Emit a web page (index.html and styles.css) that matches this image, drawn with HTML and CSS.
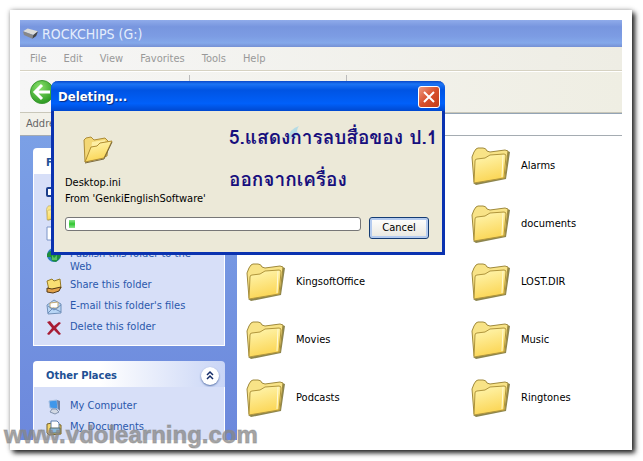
FILE: index.html
```
<!DOCTYPE html>
<html lang="en">
  <head>
    <meta charset="UTF-8" />
    <meta name="viewport" content="width=device-width, initial-scale=1.0" />
    <title>ROCKCHIPS (G:)</title>
    <link rel="stylesheet" href="styles.css">
  </head>
  <body>
    <svg class="defs" width="0" height="0" aria-hidden="true">
      <defs>
        <linearGradient id="paper" x1="0" y1="0" x2="0.3" y2="1">
          <stop offset="0" stop-color="#fff7b4" />
          <stop offset="1" stop-color="#fbd656" />
        </linearGradient>
        <radialGradient id="green" cx="0.4" cy="0.3" r="0.7">
          <stop offset="0" stop-color="#8be36c" />
          <stop offset="1" stop-color="#2c9a22" />
        </radialGradient>
        <symbol id="folder" viewBox="0 0 40 40">
          <path d="M36 5 L39 6 L35 33 L5 39 L2 37 L33 32 Z" fill="#8c854f" />
          <path d="M3 36 L1 11 L3 6 Q5 2 7 2 L12 2 Q15 2 16 5 L19 6 L34 4 L37 5 L34 32 Z" fill="#f8e387" stroke="#a08a3c" />
          <path d="M3 37 L4 15 Q4 13 6 13 L14 12 L19 9 L33 8 Q35 8 35 10 L33 32 Z" fill="url(#paper)" stroke="#b0953c" />
          <path d="M32 9 L31 31" stroke="#fffbd9" fill="none" />
        </symbol>
      </defs>
    </svg>
    <div class="frame">
      <main class="window">
        <header class="titlebar">
          <svg class="drive" viewBox="0 0 16 12" aria-hidden="true">
            <path d="M0 3 L5 0 L16 3 L11 7 Z" fill="#dcdcd8" />
            <path d="M0 3 L11 7 L10 11 L1 7 Z" fill="#888" />
            <path d="M11 7 L16 3 L14 8 L10 11 Z" fill="#444" />
          </svg>
          <h1>ROCKCHIPS (G:)</h1>
        </header>
        <nav class="menubar">
          <button type="button">File</button>
          <button type="button">Edit</button>
          <button type="button">View</button>
          <button type="button">Favorites</button>
          <button type="button">Tools</button>
          <button type="button">Help</button>
        </nav>
        <div class="toolbar">
          <button type="button" class="back" aria-label="Back">
            <svg viewBox="0 0 24 24" aria-hidden="true">
              <circle cx="12" cy="12" r="11.5" fill="url(#green)" stroke="#3d9a33" />
              <path d="M12 5 L5 12 L12 19 M6 12 H20" fill="none" stroke="#fff" stroke-width="3" />
            </svg>
          </button>
          <span class="divider"></span>
          <span class="divider"></span>
        </div>
        <div class="addressbar">
          <label for="address">Address</label>
          <input id="address" type="text" />
        </div>
        <div class="content">
          <aside class="sidebar">
            <section class="panel">
              <h2>File and Folder Tasks</h2>
              <ul>
                <li>
                  <svg viewBox="0 0 16 16" aria-hidden="true"><rect x="1" y="4" width="14" height="8" rx="1" fill="#fff" stroke="#1b3e8c" stroke-width="2" /></svg>
                </li>
                <li>
                  <svg viewBox="0 0 40 40" aria-hidden="true"><use href="#folder" /></svg>
                </li>
                <li>
                  <svg viewBox="0 0 16 16" aria-hidden="true"><path d="M1 1 H11 V14 H1 Z" fill="#fff" stroke="#7a94c8" /></svg>
                </li>
                <li>
                  <svg viewBox="0 0 16 16" aria-hidden="true">
                    <circle cx="8" cy="8" r="7" fill="#2f7fc4" />
                    <path d="M1 7 Q4 2 8 5 L14 5 Q16 9 13 12 L10 15 L6 14 L5 10 L1 10 Z" fill="#1d8d3b" />
                    <path d="M6 8 L8 11 L11 8 L11 13 L6 13 Z" fill="#56c262" />
                  </svg>
                  <a href="#">Publish this folder to the<br />Web</a>
                </li>
                <li>
                  <svg viewBox="0 0 16 16" aria-hidden="true">
                    <path d="M1 3 L6 1 L8 3 L14 1 L15 10 L3 12 Z" fill="#f8df73" stroke="#977b25" />
                    <path d="M1 10 L6 11 L15 9 L13 13 L7 15 L1 14 Z" fill="#e2a24b" stroke="#553a16" />
                  </svg>
                  <a href="#">Share this folder</a>
                </li>
                <li>
                  <svg viewBox="0 0 16 16" aria-hidden="true">
                    <path d="M1 6 L8 1 L15 5 L15 14 L2 15 Z" fill="#b8d6f6" stroke="#7190b8" />
                    <path d="M4 4 L12 3 L12 9 L4 9 Z" fill="#fff" stroke="#c2a873" />
                    <path d="M2 14 L7 9 L15 13 M2 7 L8 11 L15 6" fill="none" stroke="#6b8cb8" />
                  </svg>
                  <a href="#">E-mail this folder's files</a>
                </li>
                <li>
                  <svg viewBox="0 0 16 16" aria-hidden="true">
                    <path d="M1 2 L4 1 L8 6 L13 2 L15 3 L10 8 L15 14 L13 15 L8 10 L3 15 L1 14 L6 8 Z" fill="#a81c34" />
                  </svg>
                  <a href="#">Delete this folder</a>
                </li>
              </ul>
            </section>
            <section class="panel places">
              <h2>
                Other Places
                <button type="button" class="collapse" aria-label="Collapse">
                  <svg viewBox="0 0 18 18" aria-hidden="true"><path d="M6 8 L9 5 L12 8 M6 12 L9 9 L12 12" fill="none" stroke="#142c68" stroke-width="1.5" /></svg>
                </button>
              </h2>
              <ul>
                <li>
                  <svg viewBox="0 0 16 16" aria-hidden="true">
                    <path d="M3 2 L11 1 L12 10 L4 9 Z" fill="#3f97ea" stroke="#a4bde0" />
                    <path d="M11 1 L14 2 L14 12 L12 10 Z" fill="#6f7f9f" />
                    <path d="M6 10 L10 10 L13 13 L9 15 L4 13 Z" fill="#d3d9e4" stroke="#8292ad" />
                  </svg>
                  <a href="#">My Computer</a>
                </li>
                <li>
                  <svg viewBox="0 0 16 16" aria-hidden="true">
                    <path d="M1 4 L6 3 L15 5 L15 14 L3 15 L1 13 Z" fill="#f2d56a" stroke="#75612a" />
                    <path d="M5 1 L11 1 L13 3 L13 10 L5 10 Z" fill="#fff" stroke="#5d80af" />
                    <path d="M4 8 H14 V13 H4 Z" fill="#87b9df" stroke="#5c6a62" />
                  </svg>
                  <a href="#">My Documents</a>
                </li>
              </ul>
            </section>
          </aside>
          <ul class="files">
            <li class="right"><svg aria-hidden="true"><use href="#folder" /></svg>Alarms</li>
            <li class="right"><svg aria-hidden="true"><use href="#folder" /></svg>documents</li>
            <li><svg aria-hidden="true"><use href="#folder" /></svg>KingsoftOffice</li>
            <li><svg aria-hidden="true"><use href="#folder" /></svg>LOST.DIR</li>
            <li><svg aria-hidden="true"><use href="#folder" /></svg>Movies</li>
            <li><svg aria-hidden="true"><use href="#folder" /></svg>Music</li>
            <li><svg aria-hidden="true"><use href="#folder" /></svg>Podcasts</li>
            <li><svg aria-hidden="true"><use href="#folder" /></svg>Ringtones</li>
          </ul>
        </div>
      </main>

      <div class="dialog" role="dialog" aria-labelledby="dialog-title">
        <div class="dialog-title">
          <h2 id="dialog-title">Deleting...</h2>
          <button type="button" class="close" aria-label="Close">
            <svg viewBox="0 0 20 20" aria-hidden="true"><path d="M5 5 L15 15 M15 5 L5 15" stroke="#fff" stroke-width="2" /></svg>
          </button>
        </div>
        <div class="dialog-body">
          <svg class="open-folder" viewBox="0 0 30 28" aria-hidden="true">
            <path d="M2 26 L1 4 L3 2 L8 1 L11 4 L22 2 L25 5 L24 20 Z" fill="#f3d775" stroke="#ad8c37" />
            <path d="M9 6 L22 4 L23 10 L8 14 Z" fill="#fdeea4" />
            <path d="M2 26 L8 11 L14 10 L17 7 L29 5 L21 22 Z" fill="url(#paper)" stroke="#b08d31" />
            <path d="M2 27 L21 23 L29 6" fill="none" stroke="#7b6a3c" />
          </svg>
          <p>Desktop.ini</p>
          <p>From 'GenkiEnglishSoftware'</p>
          <div class="actions">
            <div class="progress" role="progressbar" aria-label="Deleting" aria-valuenow="2"><span style="width: 2%"></span></div>
            <button type="button" class="cancel">Cancel</button>
          </div>
        </div>
        <svg class="pointer" viewBox="0 0 16 16" aria-hidden="true">
          <path d="M2 14 Q3 4 13 1 Q9 6 13 9 Q8 15 2 14 Z" fill="#8fd2ef" opacity="0.6" />
        </svg>
        <p class="caption" lang="th">5.แสดงการลบสื่อของ ป.1<br />ออกจากเครื่อง</p>
      </div>
      <div class="watermark">www.vdolearning.com</div>
    </div>
  </body>
</html>
```
FILE: styles.css
```
:root {
  --link: #2a58ac;
  --beige: #ece9d8;
}

* {
  box-sizing: border-box;
}

body {
  margin: 0;
  padding: 10px 11px 11px 10px;
  min-height: 100vh;
  display: flex;
  background: #fff;
  font-family: "DejaVu Sans Condensed", "Noto Sans", sans-serif;
  font-size: 11px;
  line-height: 16px;
}

h1,
h2,
p,
ul {
  margin: 0;
  padding: 0;
  list-style: none;
}

button {
  font: inherit;
  color: inherit;
  padding: 0;
  border: 0;
  background: none;
}

a {
  color: inherit;
  text-decoration: none;
}

.defs {
  position: absolute;
}

.frame {
  position: relative;
  flex: 1;
  display: flex;
  padding: 10px;
  background: #fff;
  box-shadow: 3px 3px 5px #222, 0 0 5px #bbb;
}

.window {
  flex: 1;
  display: flex;
  flex-direction: column;
  min-width: 0;
}

.titlebar {
  display: flex;
  align-items: center;
  gap: 4px;
  height: 27px;
  padding: 0 3px;
  color: #e4edfc;
  background: linear-gradient(#8fabea, #7896df 25%, #7c9ce3 60%, #84a8ea 85%, #7590d4);
}

.titlebar h1 {
  font-size: 14px;
  font-weight: normal;
}

.drive {
  width: 15px;
  height: 12px;
}

.menubar {
  display: flex;
  gap: 17px;
  height: 24px;
  padding: 0 10px;
  color: #999;
  background: linear-gradient(90deg, #f6f6f6, #eeede4);
  border-bottom: 1px solid #d6d2c2;
}

.toolbar {
  display: flex;
  gap: 135px;
  height: 42px;
  padding: 3px 10px;
  background: linear-gradient(90deg, #f6f6f6, #efeee3);
  border-top: 1px solid #fff;
  border-bottom: 1px solid #c9c7b9;
}

.back,
.back svg {
  width: 24px;
  height: 34px;
}

.divider {
  width: 1px;
  background: #bbb;
}

.divider + .divider {
  margin-left: 21px;
}

.addressbar {
  display: flex;
  height: 23px;
  padding-left: 6px;
  color: #666;
  background: #f2f1e9;
  border-bottom: 1px solid #a5acb2;
}

.addressbar label {
  align-self: center;
}

.addressbar input {
  flex: 1;
  min-width: 0;
  margin-left: 8px;
  border: 0;
  border-top: 1px solid #93a4b5;
  background: #fff;
}

.content {
  flex: 1;
  display: flex;
}

.sidebar {
  display: flex;
  flex-direction: column;
  gap: 15px;
  width: 217px;
  padding: 12px 12px 0 13px;
  background: linear-gradient(#7ba0e6, #6c88dc);
}

.panel h2 {
  display: flex;
  justify-content: space-between;
  align-items: center;
  height: 26px;
  padding: 4px 6px 0 13px;
  color: #215094;
  font-size: 11px;
  background: linear-gradient(90deg, #fff 35%, #c9d5f6);
  border-radius: 4px 4px 0 0;
}

.panel ul {
  display: flex;
  flex-direction: column;
  gap: 5px;
  padding: 10px 12px 9px;
  color: var(--link);
  background: #d7dff8;
  border: 1px solid #fff;
  border-top: 0;
}

.panel li {
  display: flex;
  gap: 8px;
  line-height: 13px;
}

.panel li svg {
  flex: none;
  width: 16px;
  height: 16px;
}

.places {
  flex: 1;
  display: flex;
  flex-direction: column;
}

.places ul {
  flex: 1;
  padding-top: 12px;
  padding-bottom: 0;
  border-bottom: 0;
}

.collapse {
  display: flex;
  width: 18px;
  height: 18px;
  background: #fff;
  border-radius: 50%;
  box-shadow: 0 1px 2px #5570a8;
}

.files {
  flex: 1;
  display: grid;
  grid-template-columns: 225px 1fr;
  grid-auto-rows: 58px;
  padding: 1px 0 13px 9px;
}

.files li {
  display: flex;
  align-items: center;
  gap: 10px;
}

.files .right {
  grid-column: 2;
}

.files svg {
  width: 40px;
  height: 40px;
}

.dialog {
  position: absolute;
  left: 41px;
  top: 71px;
  width: 394px;
  background: var(--beige);
  border: 3px solid #0a32b0;
  border-top: 0;
  border-radius: 7px 7px 0 0;
}

.dialog-title {
  display: flex;
  align-items: center;
  justify-content: space-between;
  height: 30px;
  margin: 0 -3px;
  padding: 2px 5px 0 7px;
  color: #fff;
  background: linear-gradient(#0a48c8, #1c74f4 10%, #0054e3 30%, #0060fa 75%, #0048cf);
  border-radius: 7px 7px 0 0;
}

.dialog-title h2 {
  font-size: 13px;
  text-shadow: 1px 1px 1px #0a2a80;
}

.close {
  display: flex;
  width: 22px;
  height: 22px;
  background: linear-gradient(135deg, #ee9a80, #d8502c 50%, #c33d18);
  border: 1px solid #fff;
  border-radius: 3px;
}

.dialog-body {
  padding: 25px 13px 13px 11px;
}

.open-folder {
  display: block;
  width: 30px;
  height: 28px;
  margin: 0 0 11px 18px;
}

.actions {
  display: flex;
  gap: 8px;
  margin-top: 10px;
}

.progress {
  flex: 1;
  height: 14px;
  padding: 2px 3px;
  background: #fff;
  border: 1px solid #777;
  border-radius: 3px;
}

.progress span {
  display: block;
  height: 8px;
  background: linear-gradient(#8be48b, #2fc52f 50%, #8be48b);
}

.cancel {
  width: 60px;
  height: 22px;
  color: #000;
  background: linear-gradient(#fff, #e8e7df);
  border: 1px solid #143c74;
  border-radius: 3px;
  box-shadow: inset 0 0 0 2px #b4cbef;
}

.caption {
  position: absolute;
  left: 175px;
  top: 35px;
  color: #170f7d;
  font-family: "Loma", "Garuda", "Noto Sans", sans-serif;
  font-size: 19px;
  font-weight: bold;
  line-height: 42px;
  white-space: nowrap;
}

.pointer {
  position: absolute;
  left: 232px;
  top: 44px;
  width: 16px;
  height: 16px;
}

.watermark {
  position: absolute;
  left: -6px;
  bottom: 1px;
  color: rgba(135, 135, 135, 0.75);
  font-family: "Liberation Sans", Arial, sans-serif;
  font-size: 24px;
  font-weight: bold;
  line-height: 28px;
  -webkit-text-stroke: 1px rgba(135, 135, 135, 0.5);
}
```
